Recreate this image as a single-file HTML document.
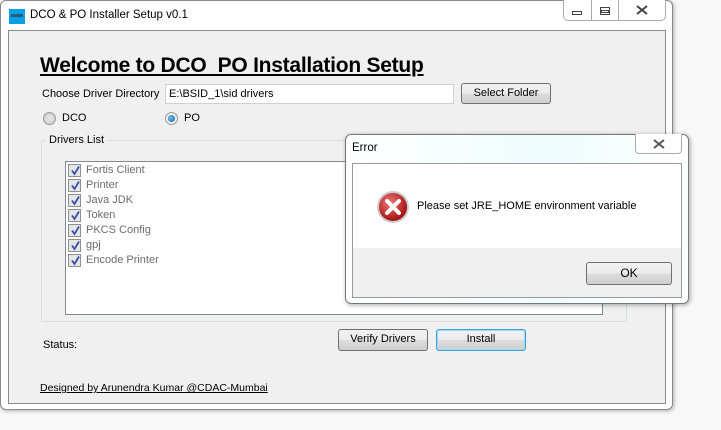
<!DOCTYPE html>
<html><head><style>
*{box-sizing:border-box;margin:0;padding:0}
body{width:721px;height:430px;background:#f8f8f8;position:relative;overflow:hidden;font-family:"Liberation Sans",sans-serif;font-size:11px;color:#000}
.a{position:absolute}
.btn{position:absolute;border:1px solid #707070;border-radius:3px;background:linear-gradient(#f2f2f2 0%,#ebebeb 50%,#dddddd 51%,#cfcfcf 100%);text-align:center;font-size:11px;line-height:19px}
.cb{position:absolute;width:13px;height:13px;border:1px solid #8f8f8f;background:#e6e6e6}
.cb svg{position:absolute;left:1px;top:0}
.it{position:absolute;color:#6d6d6d;font-size:11px}
</style></head><body>
<div class="a" style="left:0;top:0;width:673px;height:410px;background:#fff;border:1px solid #888;border-radius:6px;box-shadow:1px 1px 4px rgba(0,0,0,.3)"></div>
<div class="a" style="left:9px;top:9px;width:16px;height:15px;background:#0aa0e6"></div>
<div class="a" style="left:11px;top:14px;width:12px;height:3px;background:#333;opacity:.6"></div>
<div class="a" style="left:30px;top:9px;font-size:11.5px">DCO &amp; PO Installer Setup v0.1</div>
<div class="a" style="left:563px;top:0;width:103px;height:21px;border:1px solid #aaa;border-top:none;border-radius:0 0 5px 5px;background:#fff"></div>
<div class="a" style="left:591px;top:0;width:1px;height:20px;background:#aaa"></div>
<div class="a" style="left:618px;top:0;width:1px;height:20px;background:#aaa"></div>
<div class="a" style="left:572px;top:11px;width:10px;height:4px;border:1px solid #444"></div>
<div class="a" style="left:600px;top:7px;width:10px;height:8px;border:1px solid #444"></div>
<div class="a" style="left:601px;top:10px;width:8px;height:3px;border:1px solid #444"></div>
<svg class="a" style="left:636px;top:5px" width="12" height="10"><path d="M1 1L11 9M11 1L1 9" stroke="#444" stroke-width="2"/></svg>
<div class="a" style="left:8px;top:30px;width:658px;height:374px;background:#f0f0f0;border:1px solid #8a8a8a"></div>
<div class="a" style="left:40px;top:54px;font-size:21px;font-weight:bold;text-decoration:underline;letter-spacing:-0.25px">Welcome to DCO&nbsp; PO Installation Setup</div>
<div class="a" style="left:42px;top:88px">Choose Driver Directory</div>
<div class="a" style="left:165px;top:84px;width:289px;height:20px;background:#fff;border:1px solid #d0d0d0;padding:3px 3px">E:\BSID_1\sid drivers</div>
<div class="btn" style="left:461px;top:83px;width:90px;height:21px">Select Folder</div>
<div class="a" style="left:43px;top:112px;width:13px;height:13px;border-radius:50%;border:1px solid #999;background:radial-gradient(#e8e8e8,#c8c8c8)"></div>
<div class="a" style="left:62px;top:112px">DCO</div>
<div class="a" style="left:165px;top:112px;width:13px;height:13px;border-radius:50%;border:1px solid #999;background:#eee"></div>
<div class="a" style="left:168px;top:115px;width:7px;height:7px;border-radius:50%;background:radial-gradient(circle at 40% 40%,#6fc3f0,#0a5fa0)"></div>
<div class="a" style="left:184px;top:112px">PO</div>
<div class="a" style="left:41px;top:140px;width:586px;height:182px;border:1px solid #d8dde3;border-radius:3px"></div>
<div class="a" style="left:46px;top:134px;background:#f0f0f0;padding:0 3px">Drivers List</div>
<div class="a" style="left:65px;top:161px;width:538px;height:154px;background:#fff;border:1px solid #828790"></div>
<div id="items"></div>
<div class="a" style="left:43px;top:339px">Status:</div>
<div class="btn" style="left:338px;top:329px;width:90px;height:22px">Verify Drivers</div>
<div class="btn" style="left:436px;top:329px;width:90px;height:22px;border-color:#3c9fd8;box-shadow:inset 0 0 0 1px #9fdcf8">Install</div>
<div class="a" style="left:40px;top:382px;font-size:10.5px;text-decoration:underline">Designed by Arunendra Kumar @CDAC-Mumbai</div>
<div class="a" style="left:345px;top:134px;width:344px;height:170px;background:linear-gradient(90deg,#fff,#eefcfe 60%,#fff);border:1px solid #777;border-radius:6px;box-shadow:1px 1px 5px rgba(0,0,0,.35)"></div>
<div class="a" style="left:352px;top:142px;font-size:11.5px">Error</div>
<div class="a" style="left:635px;top:134px;width:47px;height:20px;border:1px solid #aaa;border-top:none;border-radius:0 0 4px 4px;background:#fff"></div>
<svg class="a" style="left:653px;top:139px" width="12" height="10"><path d="M1 1L11 9M11 1L1 9" stroke="#555" stroke-width="2"/></svg>
<div class="a" style="left:352px;top:163px;width:330px;height:135px;background:#f0f0f0;border:1px solid #999"></div>
<div class="a" style="left:353px;top:164px;width:328px;height:84px;background:#fff"></div>
<svg class="a" style="left:376px;top:190px" width="34" height="34" viewBox="0 0 34 34">
<defs><radialGradient id="g" cx="40%" cy="35%" r="65%"><stop offset="0" stop-color="#f27a7a"/><stop offset="1" stop-color="#a50e0e"/></radialGradient></defs>
<circle cx="17" cy="17" r="16" fill="#ccc"/><circle cx="17" cy="17" r="14" fill="url(#g)"/>
<path d="M11 11L23 23M23 11L11 23" stroke="#fff" stroke-width="4" stroke-linecap="round"/></svg>
<div class="a" style="left:417px;top:200px">Please set JRE_HOME environment variable</div>
<div class="btn" style="left:586px;top:262px;width:86px;height:23px;line-height:21px;font-size:12px">OK</div>
<script>
var n=["Fortis Client","Printer","Java JDK","Token","PKCS Config","gpj","Encode Printer"],h="";
n.forEach(function(t,i){var y=164+i*15;
h+='<div class="cb" style="left:68px;top:'+y+'px"><svg width="11" height="11" viewBox="0 0 11 11"><path d="M2 5.5L4.5 9L9 1.5" stroke="#3a4fa8" stroke-width="1.8" fill="none"/></svg></div><div class="it" style="left:86px;top:'+y+'px">'+t+'</div>';});
document.getElementById("items").innerHTML=h;
</script>
</body></html>
